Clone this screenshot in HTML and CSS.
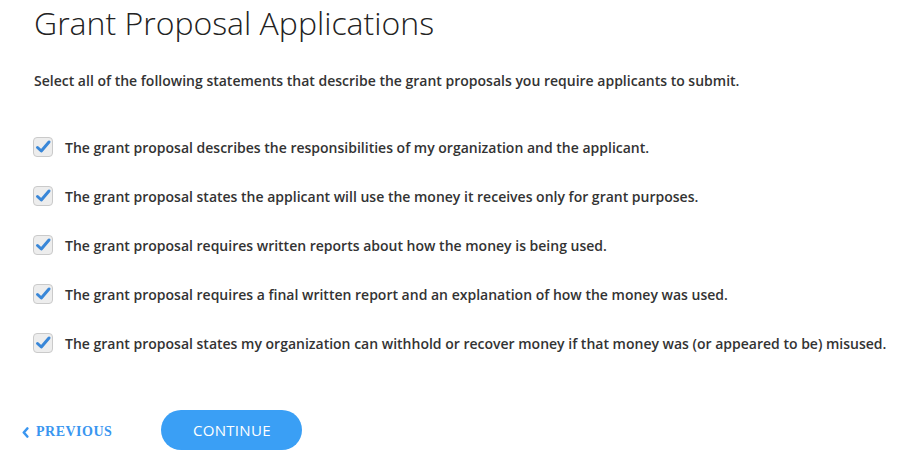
FILE: index.html
```html
<!DOCTYPE html>
<html lang="en">
<head>
<meta charset="utf-8">
<title>Grant Proposal Applications</title>
<link rel="stylesheet" href="styles.css">
</head>
<body>
<main class="page">
  <h1 class="title">Grant Proposal Applications</h1>
  <p class="lead">Select all of the following statements that describe the grant proposals you require applicants to submit.</p>
  <ul class="options">
    <li class="option"><span class="box"><svg viewBox="0 0 20 20" width="20" height="20"><path d="M4.5 10.5 L8.3 14 L16 5" fill="none" stroke="#3987d8" stroke-width="3" stroke-linecap="round" stroke-linejoin="round"/></svg></span><span class="label">The grant proposal describes the responsibilities of my organization and the applicant.</span></li>
    <li class="option"><span class="box"><svg viewBox="0 0 20 20" width="20" height="20"><path d="M4.5 10.5 L8.3 14 L16 5" fill="none" stroke="#3987d8" stroke-width="3" stroke-linecap="round" stroke-linejoin="round"/></svg></span><span class="label">The grant proposal states the applicant will use the money it receives only for grant purposes.</span></li>
    <li class="option"><span class="box"><svg viewBox="0 0 20 20" width="20" height="20"><path d="M4.5 10.5 L8.3 14 L16 5" fill="none" stroke="#3987d8" stroke-width="3" stroke-linecap="round" stroke-linejoin="round"/></svg></span><span class="label">The grant proposal requires written reports about how the money is being used.</span></li>
    <li class="option"><span class="box"><svg viewBox="0 0 20 20" width="20" height="20"><path d="M4.5 10.5 L8.3 14 L16 5" fill="none" stroke="#3987d8" stroke-width="3" stroke-linecap="round" stroke-linejoin="round"/></svg></span><span class="label">The grant proposal requires a final written report and an explanation of how the money was used.</span></li>
    <li class="option"><span class="box"><svg viewBox="0 0 20 20" width="20" height="20"><path d="M4.5 10.5 L8.3 14 L16 5" fill="none" stroke="#3987d8" stroke-width="3" stroke-linecap="round" stroke-linejoin="round"/></svg></span><span class="label">The grant proposal states my organization can withhold or recover money if that money was (or appeared to be) misused.</span></li>
  </ul>
  <div class="actions">
    <a class="prev" href="#"><svg class="chev" viewBox="0 0 7 11" width="7" height="11"><path d="M5.3 1.5 L1.8 5.5 L5.3 9.5" fill="none" stroke="#3a96f0" stroke-width="2.6" stroke-linecap="round" stroke-linejoin="round"/></svg>PREVIOUS</a>
    <button class="continue" type="button">CONTINUE</button>
  </div>
</main>
</body>
</html>
```

FILE: styles.css
```css
* { box-sizing: border-box; }
html, body { margin: 0; padding: 0; background: #fff; }
body { font-family: "Open Sans", "Liberation Sans", sans-serif; color: #333; }

.page { padding: 0 0 0 34px; }

.title {
  margin: 0;
  padding-top: 1px;
  font-weight: 300;
  font-size: 32px;
  line-height: 44px;
  color: #222;
  letter-spacing: 0;
}

.lead {
  margin: 26px 0 0;
  font-size: 14px;
  font-weight: 600;
  line-height: 20px;
  color: #333;
}

.options {
  list-style: none;
  margin: 46px 0 0;
  padding: 0;
  display: flex;
  flex-direction: column;
  gap: 29px;
}

.option {
  display: flex;
  align-items: center;
  height: 20px;
}

.box {
  width: 20px;
  height: 20px;
  margin-left: -1px;
  border: 1px solid #cacaca;
  border-radius: 4px;
  background: #ededed;
  display: flex;
  align-items: center;
  justify-content: center;
  flex: none;
}
.box svg { display: block; margin: -1px; }

.label {
  margin-left: 12px;
  font-size: 14px;
  font-weight: 600;
  color: #333;
  white-space: nowrap;
}

.actions {
  margin: 57px 0 0 -12px;
  display: flex;
  align-items: center;
}

.prev {
  display: flex;
  align-items: center;
  gap: 7px;
  font-family: "Liberation Serif", serif;
  font-weight: 700;
  font-size: 14px;
  color: #3a96f0;
  text-decoration: none;
  letter-spacing: 0.5px;
  margin-top: 4px;
}

.continue {
  margin-left: 49px;
  width: 141px;
  height: 40px;
  border: none;
  border-radius: 20px;
  background: #3a9ff5;
  color: #fff;
  font-family: "Open Sans", "Liberation Sans", sans-serif;
  font-size: 15px;
  font-weight: 400;
  letter-spacing: 0.3px;
  cursor: pointer;
}
```
